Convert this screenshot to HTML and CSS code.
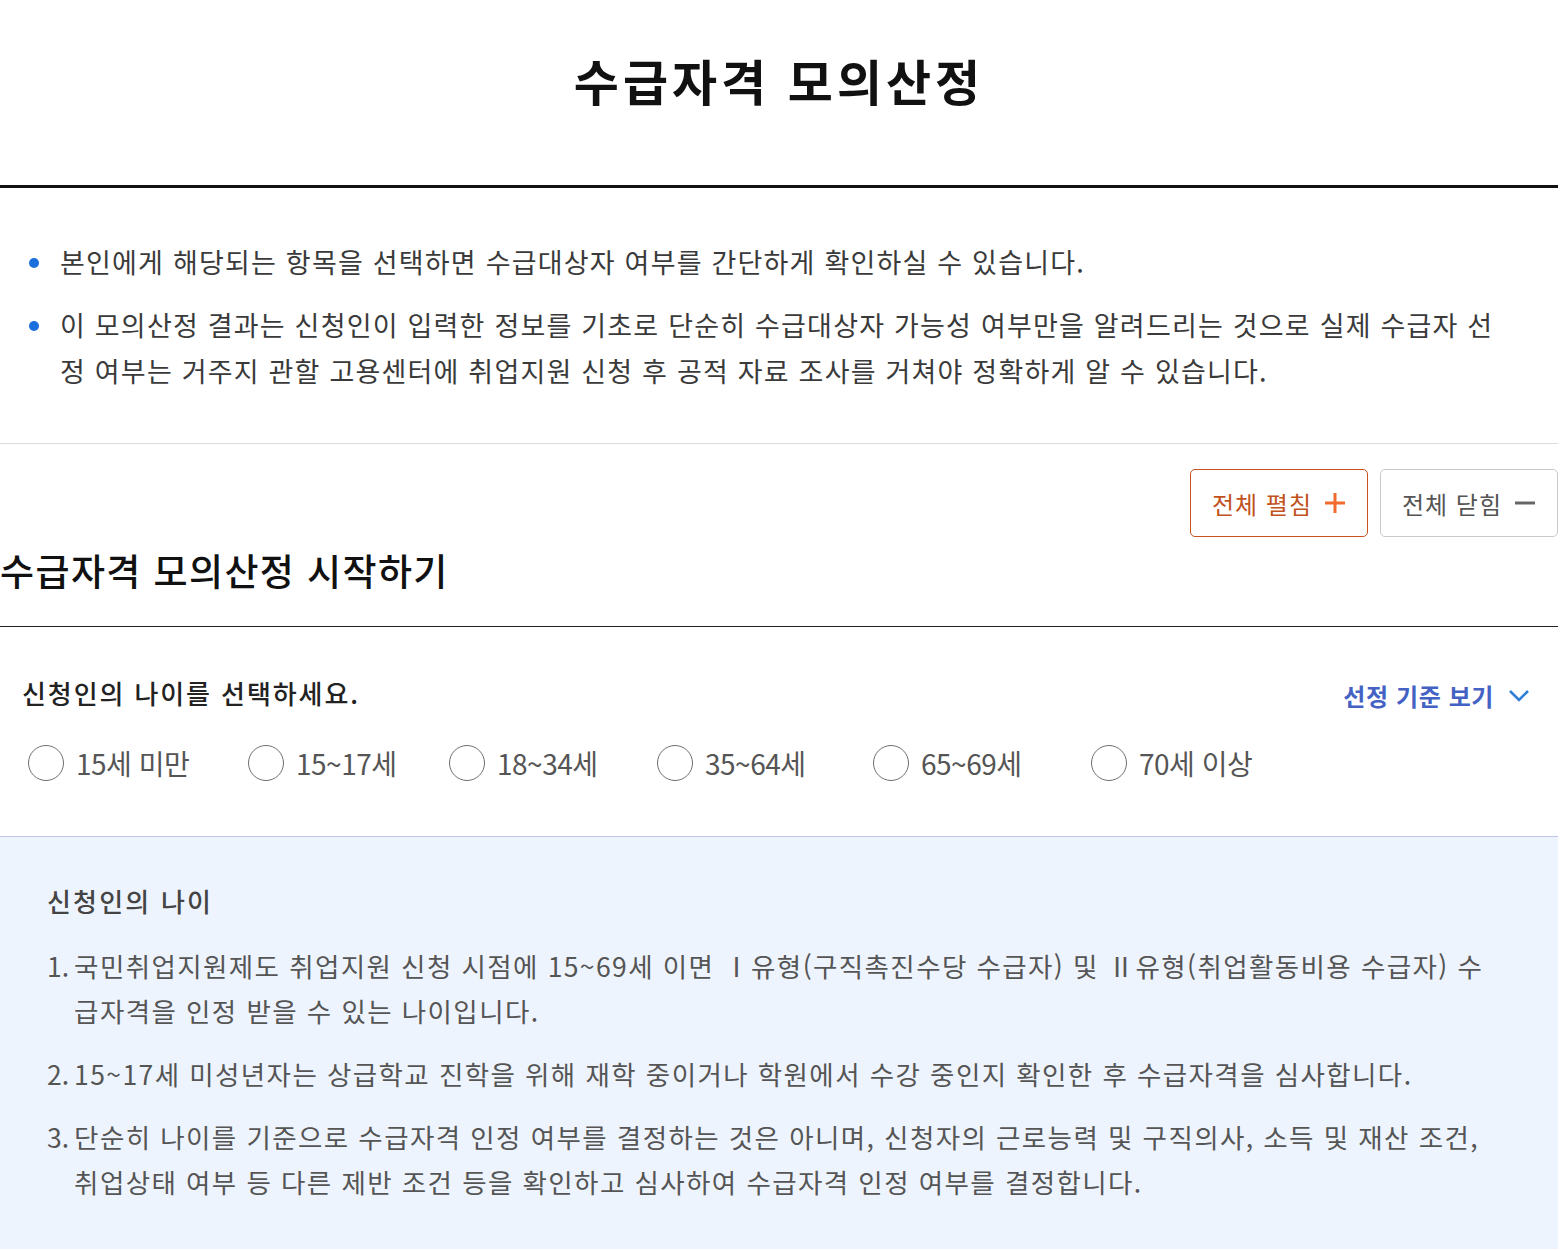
FILE: index.html
```html
<!DOCTYPE html>
<html lang="ko">
<head>
<meta charset="utf-8">
<title>수급자격 모의산정</title>
<link rel="stylesheet" href="styles.css">
</head>
<body>
<div class="page">
  <header class="head">
    <h1 class="title">수급자격 모의산정</h1>
  </header>

  <ul class="notice">
    <li>본인에게 해당되는 항목을 선택하면 수급대상자 여부를 간단하게 확인하실 수 있습니다.</li>
    <li>이 모의산정 결과는 신청인이 입력한 정보를 기초로 단순히 수급대상자 가능성 여부만을 알려드리는 것으로 실제 수급자 선정 여부는 거주지 관할 고용센터에 취업지원 신청 후 공적 자료 조사를 거쳐야 정확하게 알 수 있습니다.</li>
  </ul>

  <div class="toolbar">
    <button class="btn btn-open" type="button">전체 펼침
      <svg class="ico" width="22" height="22" viewBox="0 0 22 22"><path d="M11 1v20M1 11h20" stroke="#f26b2e" stroke-width="3" fill="none"/></svg>
    </button>
    <button class="btn btn-close" type="button">전체 닫힘
      <svg class="ico" width="22" height="22" viewBox="0 0 22 22"><path d="M1 11h20" stroke="#666" stroke-width="3" fill="none"/></svg>
    </button>
  </div>

  <h2 class="section-title">수급자격 모의산정 시작하기</h2>

  <div class="question">
    <div class="q-head">
      <p class="q-text">신청인의 나이를 선택하세요.</p>
      <a class="criteria" href="#">선정 기준 보기
        <svg width="22" height="14" viewBox="0 0 22 14"><path d="M2 2l9 9 9-9" stroke="#2f7fd6" stroke-width="2.6" fill="none"/></svg>
      </a>
    </div>
    <div class="options">
      <label class="opt"><span class="radio"></span>15세 미만</label>
      <label class="opt"><span class="radio"></span>15~17세</label>
      <label class="opt"><span class="radio"></span>18~34세</label>
      <label class="opt"><span class="radio"></span>35~64세</label>
      <label class="opt"><span class="radio"></span>65~69세</label>
      <label class="opt"><span class="radio"></span>70세 이상</label>
    </div>
  </div>

  <div class="info">
    <h3 class="info-title">신청인의 나이</h3>
    <ol class="info-list">
      <li><span class="num">1.</span><span class="txt">국민취업지원제도 취업지원 신청 시점에 15~69세 이면 Ⅰ유형(구직촉진수당 수급자) 및 Ⅱ유형(취업활동비용 수급자) 수급자격을 인정 받을 수 있는 나이입니다.</span></li>
      <li><span class="num">2.</span><span class="txt">15~17세 미성년자는 상급학교 진학을 위해 재학 중이거나 학원에서 수강 중인지 확인한 후 수급자격을 심사합니다.</span></li>
      <li><span class="num">3.</span><span class="txt">단순히 나이를 기준으로 수급자격 인정 여부를 결정하는 것은 아니며, 신청자의 근로능력 및 구직의사, 소득 및 재산 조건, 취업상태 여부 등 다른 제반 조건 등을 확인하고 심사하여 수급자격 인정 여부를 결정합니다.</span></li>
    </ol>
  </div>
</div>
</body>
</html>
```

FILE: styles.css
```css
* { box-sizing: border-box; }
html, body { margin: 0; padding: 0; background: #fff; }
body {
  font-family: "Noto Sans CJK KR", "Noto Sans", sans-serif;
  color: #333;
}
.page { width: 1558px; }

.head {
  padding: 44px 0 69px;
  border-bottom: 3px solid #111;
}
.title {
  margin: 0;
  padding-left: 0;
  text-align: center;
  font-size: 49px;
  line-height: 72px;
  font-weight: 700;
  color: #111;
  letter-spacing: 4px;
}

.notice {
  list-style: none;
  margin: 0;
  padding: 51px 50px 49px 60px;
  border-bottom: 1px solid #dcdcdc;
}
.notice li {
  position: relative;
  font-size: 27px;
  line-height: 46px;
  color: #3a3a3a;
  letter-spacing: 1.2px;
}
.notice li + li { margin-top: 17px; }
.notice li::before {
  content: "";
  position: absolute;
  left: -31px;
  top: 19px;
  width: 10px;
  height: 10px;
  border-radius: 50%;
  background: #1a6fdc;
}

.toolbar {
  display: flex;
  justify-content: flex-end;
  gap: 12px;
  margin-top: 25px;
}
.btn {
  display: flex;
  align-items: center;
  justify-content: center;
  gap: 12px;
  width: 178px;
  height: 68px;
  background: #fff;
  border-radius: 5px;
  font-family: inherit;
  font-size: 24px;
  letter-spacing: 1px;
  padding: 0;
  cursor: pointer;
}
.btn-open { border: 1px solid #c8531c; color: #c2521d; }
.btn-close { border: 1px solid #c9c9c9; color: #555; }
.ico { display: block; }

.section-title {
  margin: 8px 0 0;
  padding-bottom: 31px;
  font-size: 37px;
  line-height: 50px;
  font-weight: 500;
  color: #111;
  border-bottom: 1px solid #222;
  letter-spacing: 1.4px;
}

.question {
  padding: 45px 28px 55px 22px;
}
.q-head {
  display: flex;
  justify-content: space-between;
  align-items: center;
}
.q-text {
  margin: 0;
  font-size: 26px;
  line-height: 36px;
  font-weight: 500;
  color: #222;
  letter-spacing: 1.9px;
}
.criteria {
  display: flex;
  align-items: center;
  gap: 14px;
  margin-top: 6px;
  font-size: 24px;
  font-weight: 700;
  color: #4462c4;
  letter-spacing: 0.6px;
  text-decoration: none;
}
.criteria svg { display: block; }

.options {
  display: grid;
  grid-template-columns: 220px 201px 208px 216px 218px auto;
  margin-top: 32px;
  padding-left: 6px;
}
.opt {
  display: flex;
  align-items: center;
  gap: 12px;
  font-size: 28px;
  line-height: 36px;
  color: #555;
  letter-spacing: -0.5px;
}
.radio {
  display: block;
  flex: none;
  width: 36px;
  height: 36px;
  border: 1.6px solid #6e6e6e;
  border-radius: 50%;
  background: #fff;
}

.info {
  background: #eef4fe;
  border-top: 1px solid #bfc6ec;
  padding: 46px 56px 40px 47px;
  min-height: 413px;
}
.info-title {
  margin: 0;
  font-size: 26px;
  line-height: 36px;
  font-weight: 500;
  color: #444;
  letter-spacing: 2.2px;
}
.info-list {
  list-style: none;
  margin: 24px 0 0;
  padding: 0;
}
.info-list li {
  display: flex;
  gap: 5px;
  font-size: 26.5px;
  line-height: 45px;
  color: #555;
  letter-spacing: 1.4px;
}
.info-list li + li { margin-top: 18px; }
.num { flex: none; letter-spacing: 0; }
.txt { flex: 1; }
```
